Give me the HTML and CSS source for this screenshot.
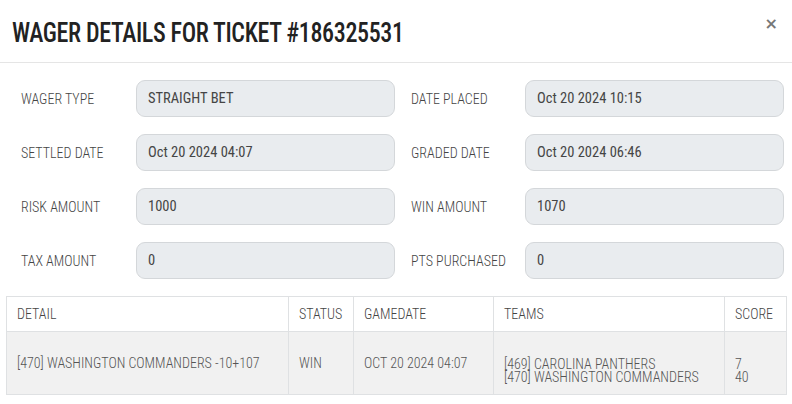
FILE: index.html
```html
<!DOCTYPE html>
<html lang="en">
<head>
<meta charset="utf-8">
<title>Wager Details</title>
<link rel="stylesheet" href="styles.css">
</head>
<body>
<div class="modal">
  <div class="modal-header">
    <h1 class="modal-title">WAGER DETAILS FOR TICKET #186325531</h1>
    <span class="close">&#215;</span>
  </div>
  <div class="form-grid">
    <div class="field"><span class="label">WAGER TYPE</span><div class="value">STRAIGHT BET</div></div>
    <div class="field"><span class="label">DATE PLACED</span><div class="value">Oct 20 2024 10:15</div></div>
    <div class="field"><span class="label">SETTLED DATE</span><div class="value">Oct 20 2024 04:07</div></div>
    <div class="field"><span class="label">GRADED DATE</span><div class="value">Oct 20 2024 06:46</div></div>
    <div class="field"><span class="label">RISK AMOUNT</span><div class="value">1000</div></div>
    <div class="field"><span class="label">WIN AMOUNT</span><div class="value">1070</div></div>
    <div class="field"><span class="label">TAX AMOUNT</span><div class="value">0</div></div>
    <div class="field"><span class="label">PTS PURCHASED</span><div class="value">0</div></div>
  </div>
  <table class="detail-table">
    <colgroup>
      <col class="c-detail"><col class="c-status"><col class="c-date"><col class="c-teams"><col class="c-score">
    </colgroup>
    <thead>
      <tr><th>DETAIL</th><th>STATUS</th><th>GAMEDATE</th><th>TEAMS</th><th>SCORE</th></tr>
    </thead>
    <tbody>
      <tr>
        <td>[470] WASHINGTON COMMANDERS -10+107</td>
        <td>WIN</td>
        <td>OCT 20 2024 04:07</td>
        <td class="stack">[469] CAROLINA PANTHERS<br>[470] WASHINGTON COMMANDERS</td>
        <td class="stack">7<br>40</td>
      </tr>
    </tbody>
  </table>
</div>
</body>
</html>
```
FILE: styles.css
```css
* { box-sizing: border-box; }
html, body { margin: 0; padding: 0; background: #fff; }
body {
  font-family: Roboto, "Liberation Sans", sans-serif;
  font-stretch: 75%;
  color: #444;
  width: 792px;
  height: 404px;
  overflow: hidden;
}
.modal-header {
  display: flex;
  justify-content: space-between;
  align-items: flex-start;
  height: 63px;
  border-bottom: 1px solid #e5e5e5;
  padding: 0 14px 0 12px;
}
.modal-title {
  margin: 0;
  padding-top: 16px;
  font-size: 24px;
  line-height: 30px;
  font-weight: 500;
  font-stretch: 75%;
  color: #222;
  letter-spacing: -0.35px;
  transform: scaleY(1.16);
  transform-origin: left center;
}
.close {
  font-family: "DejaVu Sans", sans-serif;
  font-stretch: normal;
  font-size: 16px;
  font-weight: bold;
  color: #777;
  line-height: 16px;
  padding-top: 16px;
}
.form-grid {
  display: grid;
  grid-template-columns: 374px 373px;
  column-gap: 16px;
  row-gap: 17px;
  padding: 17px 8px 0 21px;
}
.field {
  display: grid;
  grid-template-columns: 115px 1fr;
  align-items: center;
}
.field:nth-child(even) { grid-template-columns: 114px 1fr; }
.label {
  font-size: 14px;
  font-weight: 300;
  color: #444;
}
.value {
  height: 37px;
  border: 1px solid #d4d7da;
  border-radius: 9px;
  background: #e9ecef;
  padding: 0 11px;
  display: flex;
  align-items: center;
  font-size: 14.5px;
  font-weight: 400;
  color: #454545;
}
.detail-table {
  margin: 17px 0 0 6px;
  width: 780px;
  table-layout: fixed;
  border-collapse: collapse;
  font-size: 14px;
  font-weight: 300;
  color: #555;
}
.c-detail { width: 282px; }
.c-status { width: 65px; }
.c-date { width: 140px; }
.c-teams { width: 231px; }
.c-score { width: 62px; }
.detail-table th, .detail-table td {
  border: 1px solid #dfe1e3;
  padding: 0 10px;
  text-align: left;
  font-weight: 300;
}
.detail-table th {
  height: 35px;
  background: #fff;
  color: #444;
}
.detail-table td {
  height: 63px;
  background: #f1f1f1;
  color: #555;
}
.detail-table td.stack {
  line-height: 13.5px;
  padding-top: 16px;
}
```
